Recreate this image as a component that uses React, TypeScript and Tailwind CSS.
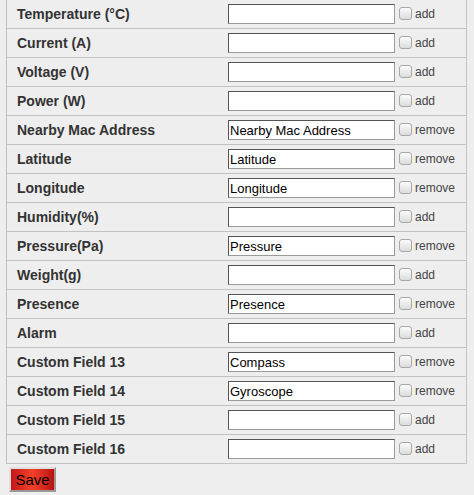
import React from "react";

const rows: { label: string; value: string; action: "add" | "remove" }[] = [
  { label: "Temperature (°C)", value: "", action: "add" },
  { label: "Current (A)", value: "", action: "add" },
  { label: "Voltage (V)", value: "", action: "add" },
  { label: "Power (W)", value: "", action: "add" },
  { label: "Nearby Mac Address", value: "Nearby Mac Address", action: "remove" },
  { label: "Latitude", value: "Latitude", action: "remove" },
  { label: "Longitude", value: "Longitude", action: "remove" },
  { label: "Humidity(%)", value: "", action: "add" },
  { label: "Pressure(Pa)", value: "Pressure", action: "remove" },
  { label: "Weight(g)", value: "", action: "add" },
  { label: "Presence", value: "Presence", action: "remove" },
  { label: "Alarm", value: "", action: "add" },
  { label: "Custom Field 13", value: "Compass", action: "remove" },
  { label: "Custom Field 14", value: "Gyroscope", action: "remove" },
  { label: "Custom Field 15", value: "", action: "add" },
  { label: "Custom Field 16", value: "", action: "add" },
];

export default function App() {
  return (
    <div
      className="w-[474px] h-[495px] bg-[#eeeeee] overflow-hidden"
      style={{ fontFamily: '"Liberation Sans", Arial, sans-serif' }}
    >
      <div className="ml-[6px] w-[461px] border-l border-r border-[#c2c2c2]">
        {rows.map((r) => (
          <div
            key={r.label}
            className="flex items-center h-[29px] border-b border-[#c2c2c2]"
          >
            <div className="w-[221px] pl-[10px] text-[14px] font-bold text-[#333333] leading-none">
              {r.label}
            </div>
            <div className="w-[167px] h-[20px] bg-white border border-t-[#555555] border-l-[#555555] border-b-[#9a9a9a] border-r-[#9a9a9a] flex items-center pl-[1px] text-[13px] text-black leading-none">
              {r.value}
            </div>
            <span className="ml-[4px] w-[13px] h-[13px] rounded-[3px] border border-[#a8a8a8] bg-gradient-to-b from-[#fbfbfb] to-[#dcdcdc] -mt-[1px]" />
            <span className="ml-[3px] text-[12px] text-[#444444] leading-none">
              {r.action}
            </span>
          </div>
        ))}
      </div>
      <button className="ml-[9px] mt-[3px] w-[47px] h-[25px] border-[2px] border-t-[#e0e0e0] border-l-[#e0e0e0] border-r-[#999999] border-b-[#999999] bg-gradient-to-r from-[#c41616] via-[#f5402a] to-[#b81212] text-[15px] text-black flex items-center justify-center leading-none">
        Save
      </button>
    </div>
  );
}
